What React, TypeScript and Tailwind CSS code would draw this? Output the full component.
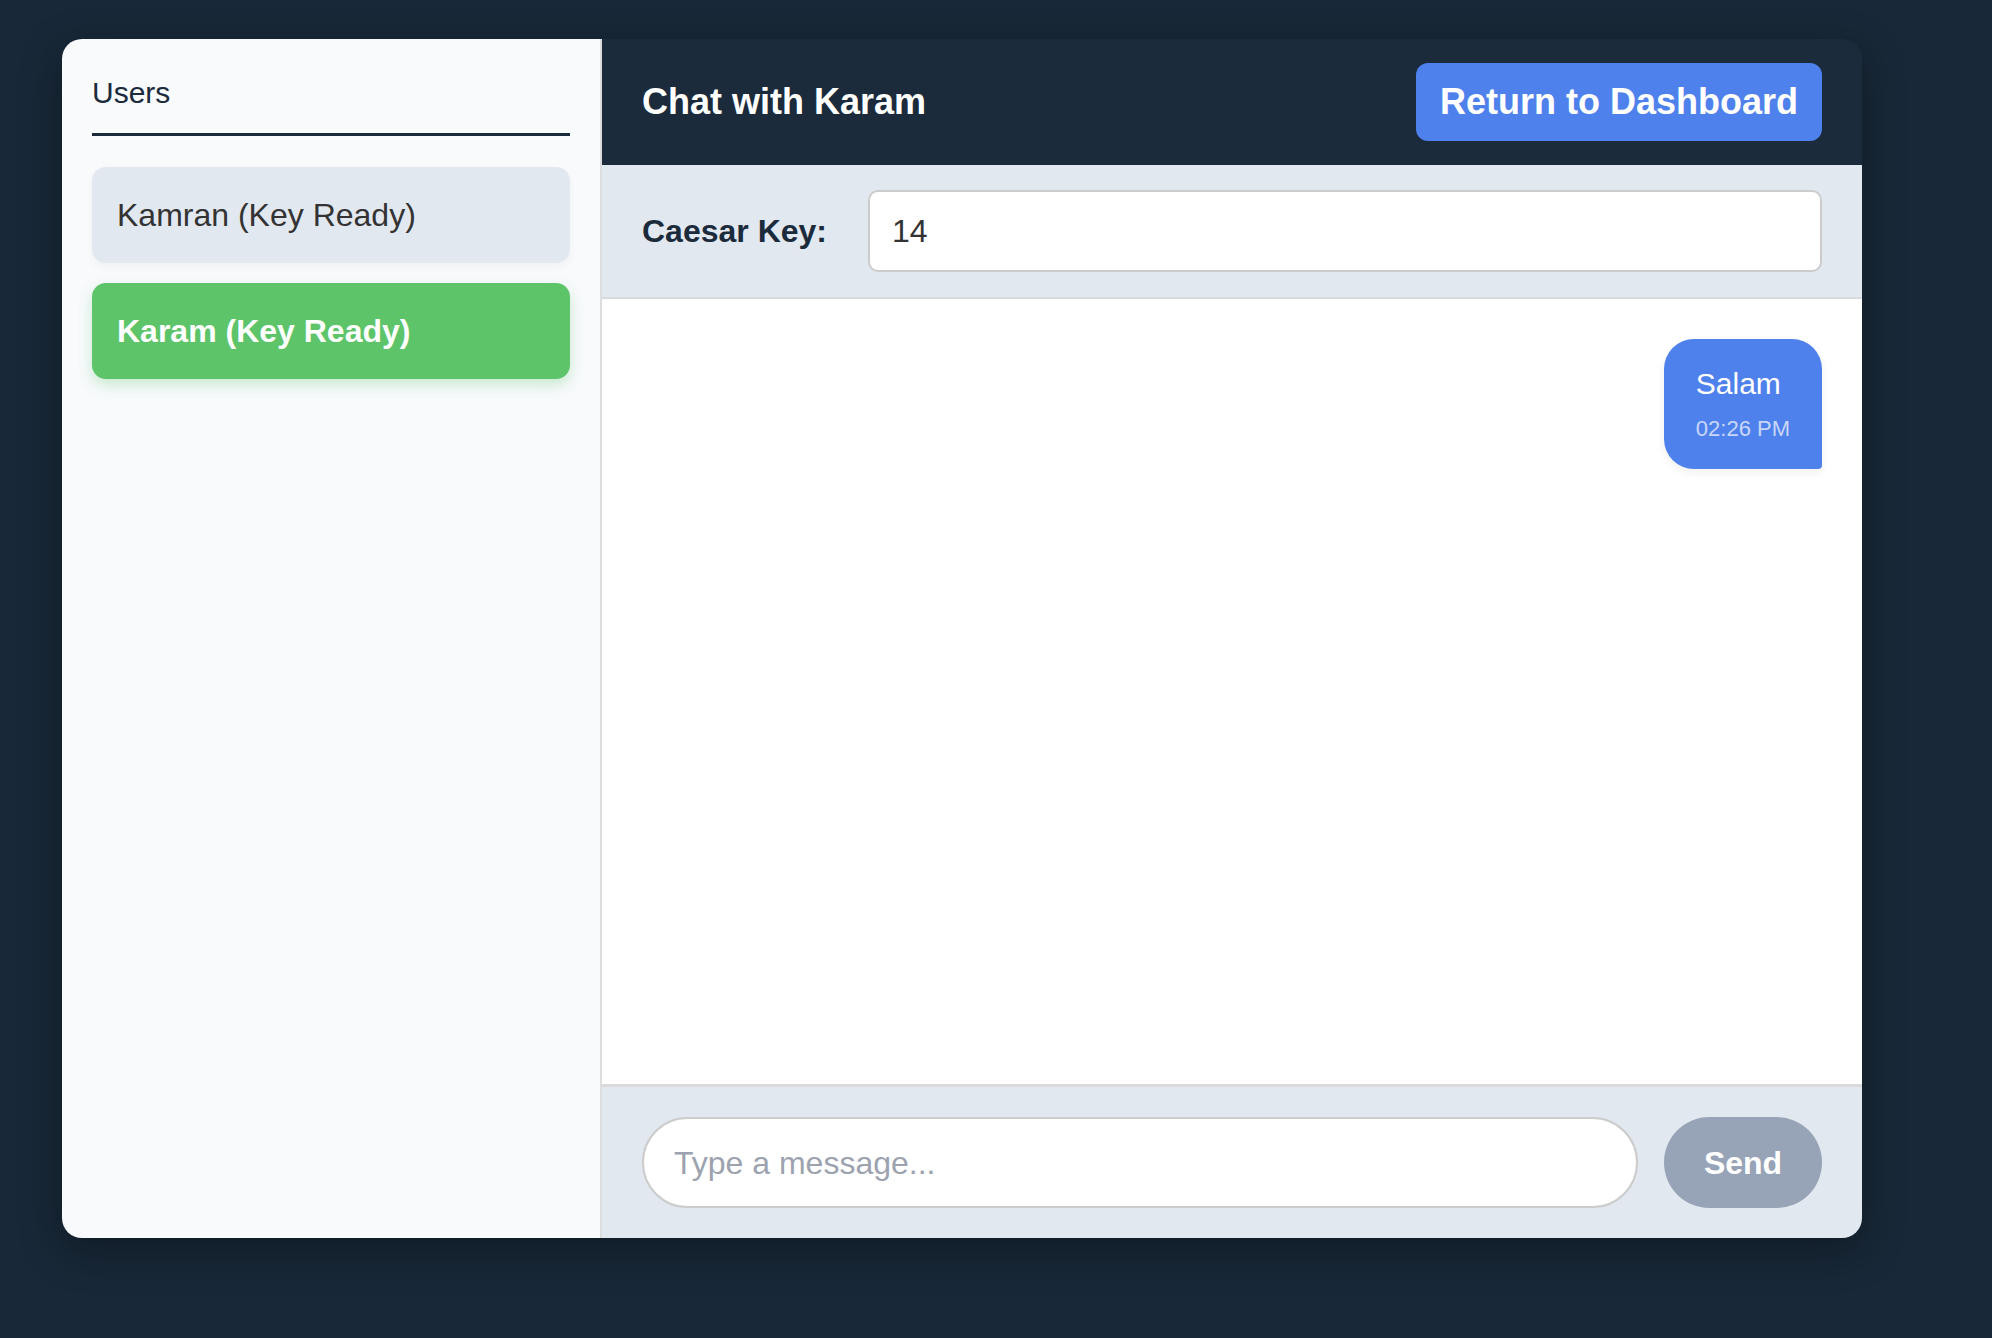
const users = [
  { name: "Kamran", ready: true },
  { name: "Karam", ready: true },
];

const activeUser = "Karam";

export default function App() {
  return (
    <div className="min-h-screen w-full bg-[#182838] pl-[62px] pt-[39px] font-['Liberation_Sans',Arial,sans-serif]">
      <div className="flex h-[1199px] w-[1800px] overflow-hidden rounded-[20px] shadow-[0_12px_40px_rgba(0,0,0,0.35)]">
        <aside className="w-[540px] shrink-0 border-r-2 border-[#dddddd] bg-[#f8fafc] px-[30px] pt-[37px]">
          <h2 className="border-b-[3px] border-[#1b2b3c] pb-[23px] text-[30px] leading-[34px] font-normal text-[#1b2b3c]">
            Users
          </h2>
          <ul className="mt-[31px] flex flex-col gap-5">
            {users.map((user) => {
              const active = user.name === activeUser;
              return (
                <li
                  key={user.name}
                  className={
                    active
                      ? "flex h-[96px] items-center rounded-[14px] bg-[#5ec46a] px-[25px] text-[32px] font-bold text-white shadow-[0_6px_14px_rgba(94,196,106,0.3)]"
                      : "flex h-[96px] items-center rounded-[14px] bg-[#e2e8f0] px-[25px] text-[32px] text-[#333333] shadow-[0_4px_10px_rgba(0,0,0,0.04)]"
                  }
                >
                  {user.name} {user.ready ? "(Key Ready)" : "(No Key)"}
                </li>
              );
            })}
          </ul>
        </aside>

        <main className="flex min-w-0 flex-1 flex-col">
          <header className="flex h-[126px] shrink-0 items-center justify-between bg-[#1b2b3c] px-[40px]">
            <h1 className="text-[36px] font-bold text-white">Chat with {activeUser}</h1>
            <button
              type="button"
              className="flex h-[78px] items-center rounded-[12px] bg-[#4f81ec] px-[24px] text-[36px] font-bold text-white"
            >
              Return to Dashboard
            </button>
          </header>

          <div className="flex shrink-0 items-center gap-[41px] border-b-2 border-[#d6dadf] bg-[#e2e8f0] px-[40px] py-[25px]">
            <label className="text-[32px] font-bold text-[#1b2b3c]">Caesar Key:</label>
            <div className="flex h-[82px] flex-1 items-center rounded-[10px] border-2 border-[#cccccc] bg-white px-[22px] text-[32px] text-[#333333]">
              14
            </div>
          </div>

          <div className="flex flex-1 flex-col items-end bg-white p-[40px]">
            <div className="rounded-[30px] rounded-br-[4px] bg-[#4f81ec] px-[32px] pb-[27px] pt-[28px] shadow-[0_4px_10px_rgba(0,0,0,0.06)]">
              <p className="text-[30px] leading-[34px] text-white">Salam</p>
              <p className="mt-[15px] text-[22px] leading-[26px] text-white/70">02:26 PM</p>
            </div>
          </div>

          <div className="flex shrink-0 items-center gap-[26px] border-t-[3px] border-[#dadada] bg-[#e2e8f0] px-[40px] py-[30px]">
            <div className="flex h-[91px] flex-1 items-center rounded-full border-2 border-[#cccccc] bg-white pl-[30px] text-[32px] text-[#9ca3af]">
              Type a message...
            </div>
            <button
              type="button"
              className="h-[91px] w-[158px] rounded-full bg-[#97a3b6] text-[32px] font-bold text-white"
            >
              Send
            </button>
          </div>
        </main>
      </div>
    </div>
  );
}
